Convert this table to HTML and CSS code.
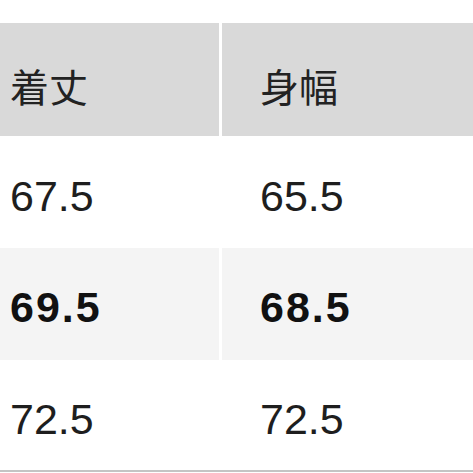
FILE: index.html
```html
<!DOCTYPE html>
<html lang="ja">
<head>
<meta charset="utf-8">
<link rel="stylesheet" href="styles.css">
</head>
<body>
<div class="table">
  <div class="cell head left"><span class="jp">着丈</span></div>
  <div class="cell head right"><span class="jp">身幅</span></div>
  <div class="cell r1 left">67.5</div>
  <div class="cell r1 right">65.5</div>
  <div class="cell r2 left bold">69.5</div>
  <div class="cell r2 right bold">68.5</div>
  <div class="cell r3 left">72.5</div>
  <div class="cell r3 right">72.5</div>
</div>
</body>
</html>
```
FILE: styles.css
```css
html, body {
  margin: 0;
  padding: 0;
  background: #ffffff;
}
body {
  width: 473px;
  height: 473px;
  overflow: hidden;
}
.table {
  margin-top: 23px;
  display: grid;
  grid-template-columns: 219px 251px;
  grid-template-rows: 113px 112px 111.5px 110.5px;
  column-gap: 3px;
  border-bottom: 2px solid #c4c4c4;
  font-family: "Liberation Sans", Arial, "Noto Sans CJK JP", sans-serif;
  color: #1e1e1e;
}
.cell {
  display: flex;
  align-items: center;
  font-size: 43px;
  line-height: 1;
  padding-top: 8px;
  box-sizing: border-box;
}
.left { padding-left: 10px; }
.right { padding-left: 38px; }
.head { background: #d9d9d9; padding-top: 12px; }
.jp {
  font-family: "Noto Sans CJK JP", sans-serif;
  font-size: 39px;
  color: #222;
}
.r1 { background: #ffffff; }
.r2 { background: #f4f4f4; }
.r3 { background: #ffffff; padding-top: 10px; }
.bold { font-weight: bold; color: #111; letter-spacing: 2px; }
```
